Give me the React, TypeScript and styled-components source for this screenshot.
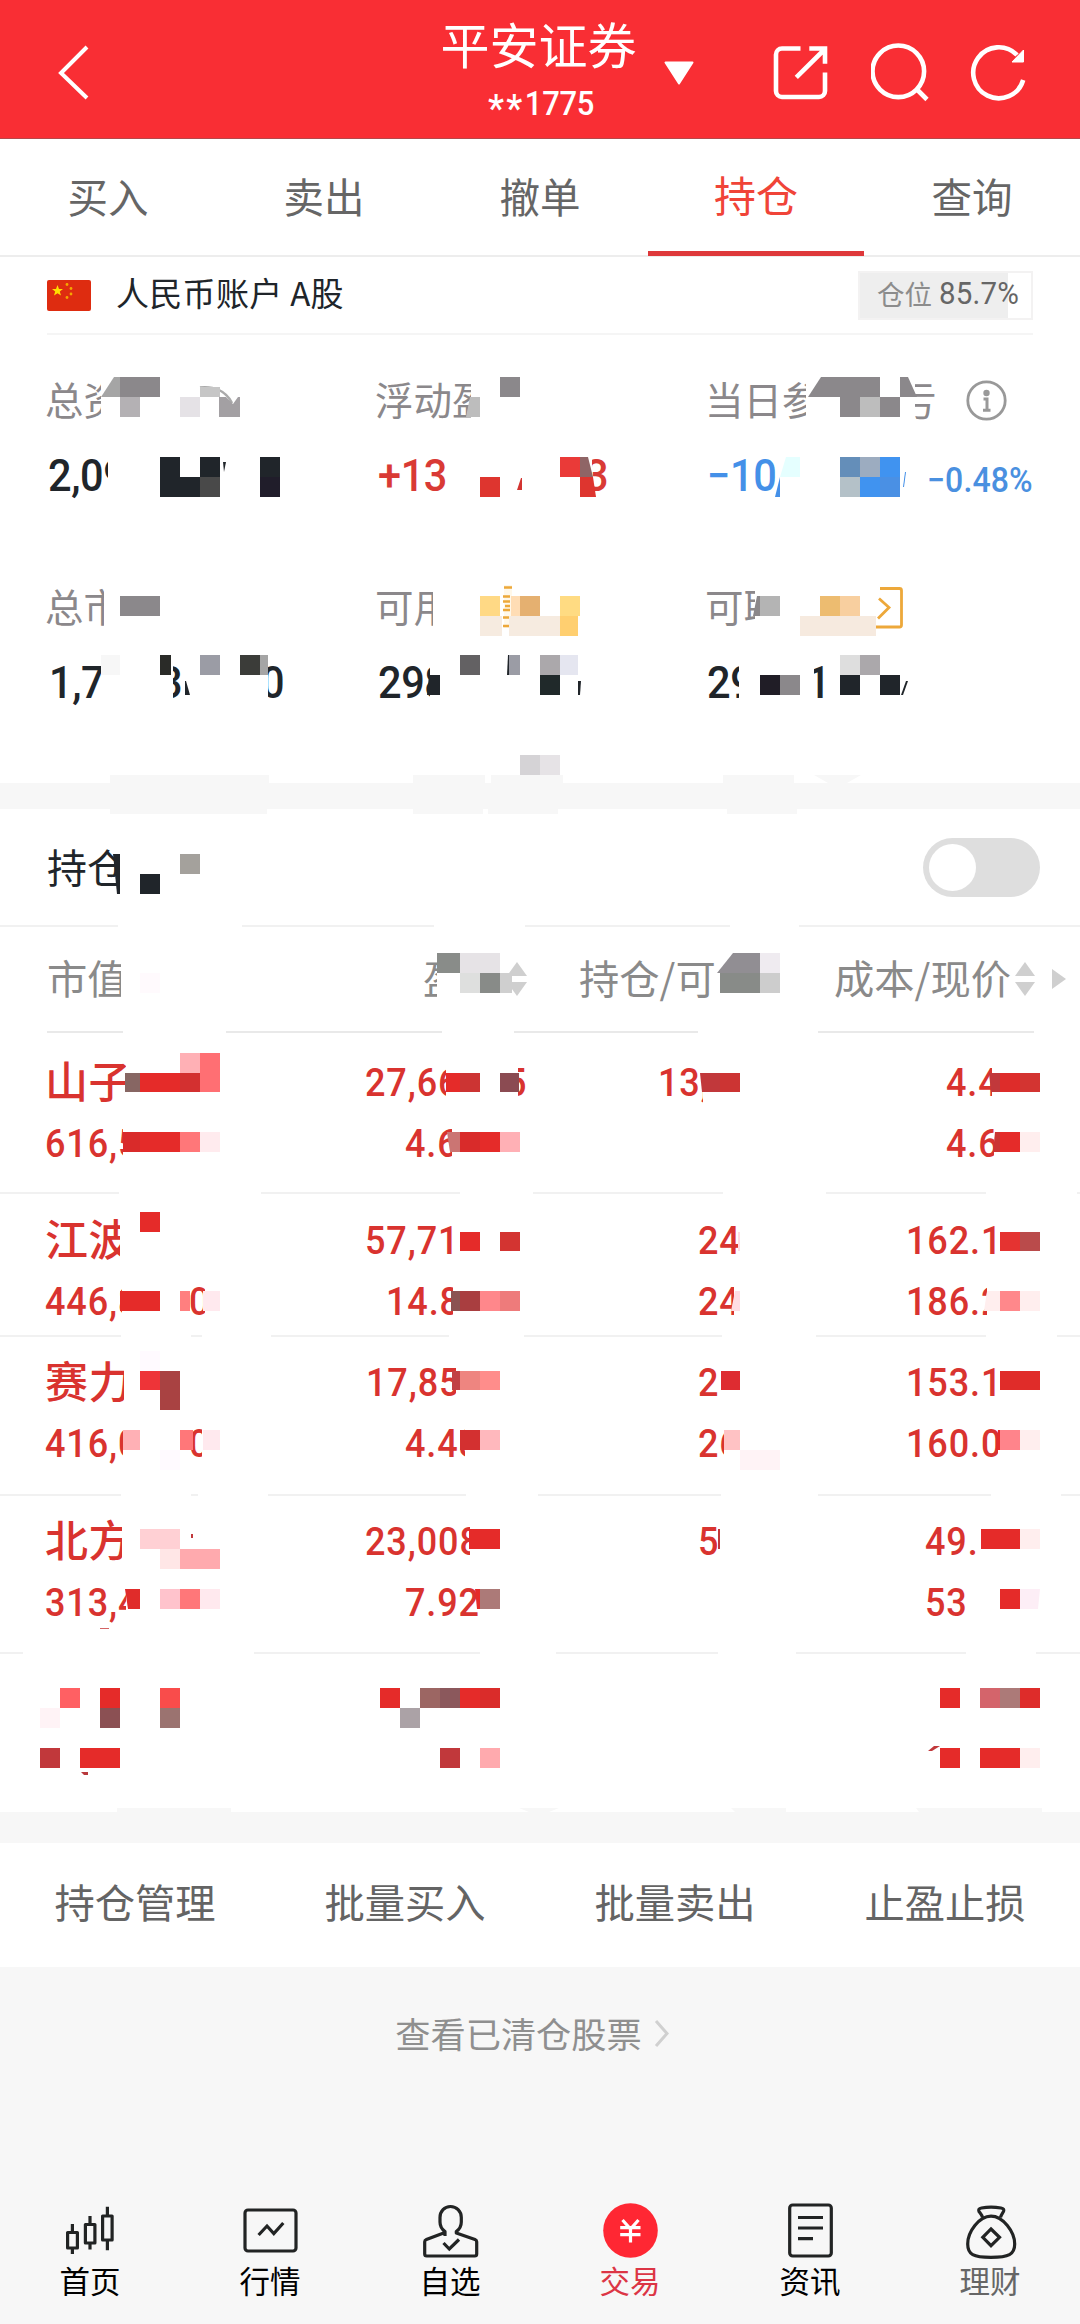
import React from 'react';
import styled, { createGlobalStyle, css } from 'styled-components';

const CJK = "'Noto Sans CJK SC', 'Noto Sans', sans-serif";
const NUM = "Roboto, 'Noto Sans CJK SC', sans-serif";
const RED = '#e52b29';
const INK = '#20252a';
const GREY = '#8b888b';

const GlobalStyle = createGlobalStyle`
  * { box-sizing: border-box; }
  body { margin: 0; background: #f7f7f7; font-family: ${CJK}; }
`;

const Page = styled.div`
  position: relative;
  width: 1080px;
  height: 2324px;
  display: flex;
  flex-direction: column;
  background: #f7f7f7;
  overflow: hidden;
`;

/* ---------- header ---------- */
const Header = styled.header`
  height: 139px;
  flex: none;
  display: grid;
  grid-template-columns: 440px 200px 440px;
  background: #f92e34;
  border-bottom: 1px solid #b5484b;
  color: #fff;
`;
const HeaderLeft = styled.div`
  display: flex;
  align-items: center;
  padding: 8px 0 0 43px;
`;
const HeaderTitle = styled.div`
  display: flex;
  flex-direction: column;
  align-items: center;
  padding-top: 13px;
`;
const BrokerName = styled.div`
  font: 400 49px/60px ${CJK};
  margin-left: -3px;
  white-space: nowrap;
`;
const AccountTail = styled.div`
  display: flex;
  align-items: center;
  font: 500 31px/56px ${NUM};
  letter-spacing: -0.3px;
  margin: -2px 0 0 2px;
  transform: scaleY(1.08);
`;
const Stars = styled.span`
  font-size: 36px;
  letter-spacing: 2.5px;
  padding-top: 10px;
`;
const HeaderRight = styled.div`
  display: flex;
  align-items: center;
  padding: 8px 0 0 24px;
`;
const IconSlot = styled.div<{ $gap?: number }>`
  display: flex;
  margin-left: ${p => p.$gap ?? 0}px;
`;

/* ---------- tabs ---------- */
const Tabs = styled.nav`
  height: 118px;
  flex: none;
  display: grid;
  grid-template-columns: repeat(5, 1fr);
  background: #fff;
  border-bottom: 2px solid #ededed;
`;
const Tab = styled.div<{ $active?: boolean }>`
  display: flex;
  justify-content: center;
  height: 117px;
  font: 400 ${p => (p.$active ? 42 : 40.5)}px/${p => (p.$active ? 110 : 113)}px ${CJK};
  color: ${p => (p.$active ? '#f04438' : '#666')};
  ${p => p.$active && css`border-bottom: 5px solid #de383a;`}
`;

/* ---------- account ---------- */
const Account = styled.section`
  height: 526px;
  flex: none;
  background: #fff;
  padding: 0 47px;
`;
const AccountBar = styled.div`
  height: 78px;
  display: flex;
  align-items: center;
  border-bottom: 2px solid #f5f5f5;
`;
const AccountName = styled.div`
  flex: 1;
  margin: -6px 0 0 25px;
  font: 400 33px/44px ${CJK};
  letter-spacing: 0.3px;
  color: ${INK};
`;
const Flag = styled.div`
  display: flex;
  margin-top: 1px;
`;
const Position = styled.div`
  width: 175px;
  height: 49px;
  display: flex;
  align-items: center;
  padding: 0 0 4px 17px;
  border: 2px solid #f3f2f2;
  background: linear-gradient(to right, #eee 148px, #fff 148px);
  font: 400 27.5px/40px ${CJK};
  color: #8c8c8c;
`;
const Percent = styled.span`
  font: 400 29.5px/44px ${NUM};
  margin: 2px 0 0 7px;
  letter-spacing: 0.2px;
  transform: scaleY(1.05);
  color: #666;
`;
const StatGrid = styled.div`
  display: grid;
  grid-template-columns: 330px 330px 330px;
  grid-auto-rows: 207px;
  padding-top: 37px;
`;
const Stat = styled.div`
  display: flex;
  flex-direction: column;
`;
const StatLabel = styled.div`
  display: flex;
  height: 52px;
  margin-left: -2px;
  font: 400 38.5px/52px ${CJK};
  color: ${GREY};
`;
const StatValue = styled.div<{ $color?: string }>`
  display: flex;
  height: 60px;
  margin-top: 22px;
  font: 500 41.5px/60px ${NUM};
  letter-spacing: -0.4px;
  padding-left: 1px;
  transform: scaleY(1.09);
  color: ${p => p.$color ?? INK};
`;
const Change = styled.span`
  margin: 4px 0 0 147px;
  font: 500 32px/60px ${NUM};
  letter-spacing: 0.1px;
  white-space: nowrap;
  color: #4a90e0;
`;

/* A run of text of which only a window stays readable. */
const Window = styled.span<{ $w: number; $gap?: number }>`
  flex: none;
  width: ${p => p.$w}px;
  margin-left: ${p => p.$gap ?? 0}px;
  overflow: hidden;
  white-space: nowrap;
`;
const Shifted = styled.span<{ $by: number }>`
  display: inline-block;
  margin-left: ${p => -p.$by}px;
`;
type PieceData = { t: string; w: number; gap?: number; shift?: number };
const Piece = ({ t, w, gap, shift = 0 }: PieceData) => (
  <Window $w={w} $gap={gap}><Shifted $by={shift}>{t}</Shifted></Window>
);

/* ---------- holdings ---------- */
const Gap = styled.div<{ $h: number }>`
  height: ${p => p.$h}px;
  flex: none;
  background: #f7f7f7;
`;
const HoldingHead = styled.div`
  height: 116px;
  flex: none;
  display: flex;
  justify-content: space-between;
  align-items: center;
  padding: 0 40px 0 47px;
  background: #fff;
  font: 400 40px/60px ${CJK};
  color: ${INK};
`;
const Switch = styled.div`
  width: 117px;
  height: 59px;
  border-radius: 30px;
  padding: 6px;
  background: #dedede;
`;
const Knob = styled.div`
  width: 47px;
  height: 47px;
  border-radius: 50%;
  background: #fff;
`;
type Seg = [number, number];
const segGradient = (segs: Seg[], color: string) =>
  'linear-gradient(to right, ' +
  segs.map(([a, b]) => `transparent ${a}px, ${color} ${a}px, ${color} ${b}px, transparent ${b}px`).join(', ') + ')';
const Rule = styled.div<{ $segs: Seg[]; $color?: string }>`
  height: 2px;
  flex: none;
  background: ${p => segGradient(p.$segs, p.$color ?? '#f1f1f1')} #fff;
`;
const ColumnHead = styled.div`
  height: 104px;
  flex: none;
  display: grid;
  grid-template-columns: 423px 156px 255px 246px;
  align-items: center;
  background: #fff;
  padding-bottom: 1px;
  font: 400 40.3px/60px ${CJK};
  color: #8a8a8a;
`;
const HeadCell = styled.div<{ $left?: number }>`
  display: flex;
  align-items: center;
  padding-left: ${p => p.$left ?? 0}px;
  white-space: nowrap;
`;
const HeadText = styled.span`
  display: flex;
  margin-top: -3px;
`;
const Row = styled.div<{ $h: number; $top: number }>`
  height: ${p => p.$h}px;
  flex: none;
  display: grid;
  grid-template-columns: 320px 206px 254px 260px;
  padding: ${p => p.$top}px 0 0;
  background: #fff;
  color: #d9332f;
`;
const Cell = styled.div<{ $lead?: boolean }>`
  display: flex;
  flex-direction: column;
  ${p => (p.$lead ? css`padding-left: 45px;` : css`align-items: flex-end;`)}
`;
const Line = styled.div<{ $name?: boolean; $reserve?: number }>`
  display: flex;
  height: 61px;
  font: 500 36px/61px ${NUM};
  letter-spacing: 0.9px;
  transform: scaleY(1.083);
  ${p => p.$reserve && css`width: ${p.$reserve}px;`}
  ${p => p.$name && css`font: 500 43px/52px ${CJK}; letter-spacing: 0.6px; transform: none;`}
`;

/* ---------- footer parts ---------- */
const Actions = styled.div`
  height: 124px;
  flex: none;
  display: grid;
  grid-template-columns: repeat(4, 1fr);
  background: #fff;
  text-align: center;
  font: 400 40.3px/115px ${CJK};
  color: #646464;
`;
const Cleared = styled.div`
  flex: 1;
  display: flex;
  justify-content: center;
  gap: 11px;
  padding: 38px 14px 0 0;
  font: 400 35.2px/56px ${CJK};
  color: #8f8f8f;
`;
const Chevron = styled.div`
  padding-top: 13px;
  line-height: 0;
`;
const BottomNav = styled.nav`
  height: 124px;
  flex: none;
  display: grid;
  grid-template-columns: repeat(6, 1fr);
`;
const NavItem = styled.div<{ $color?: string }>`
  display: flex;
  flex-direction: column;
  align-items: center;
  font: 400 30.5px/41px ${CJK};
  color: ${p => p.$color ?? '#000'};
`;

/* ---------- redaction layer ---------- */
const Redaction = styled.div`
  position: absolute;
  inset: 0;
  pointer-events: none;
`;
type CellProps = { $x: number; $y: number; $w: number; $h: number; $c: string; $cut?: string };
const Pixel = styled.i.attrs<CellProps>(p => ({
  style: { left: p.$x, top: p.$y, width: p.$w, height: p.$h, background: p.$c, clipPath: p.$cut },
}))<CellProps>`
  position: absolute;
`;

// [top, height, [left, right, colour, leftSlantTop?, leftSlantBottom?, rightSlantTop?, rightSlantBottom?][]]
type Block = [number, number, string, number?, number?, number?, number?];
const BANDS: [number, number, Block[]][] = [
  [377, 20, [[101, 120, '#a5a5a5', 13, 0], [120, 160, GREY], [500, 520, GREY], [808, 880, GREY, 13, 0], [900, 917, GREY, 0, 0, 9, 0]]],
  [387, 10, [[200, 220, '#c6c6c6', 0, 0, 0, 0]]],
  [397, 20, [[120, 140, '#b4b1b4'], [180, 200, '#e5e2e6'], [466, 480, '#bdbdbd', 4, 0], [840, 860, GREY], [860, 880, '#bdbdbd'], [880, 900, GREY]]],
  [457, 20, [[160, 180, INK], [200, 220, INK], [260, 280, INK], [560, 580, '#ea3a38'], [580, 593, '#8f6566', 0, 0, 5, 0], [780, 800, '#e5ffff', 6, 0], [840, 860, '#648eb9'], [860, 880, '#9cacc0'], [880, 900, '#4093f0']]],
  [462, 10, [[223, 226, INK, 0, 1, 0, 2]]],
  [477, 20, [[160, 200, INK], [200, 220, '#494949'], [260, 280, '#201d2a'], [480, 500, '#de352f'], [580, 596, '#de352f', 0, 0, 3, 0], [775, 780, '#4490e8', 5, 0], [840, 860, '#b4c1c8'], [860, 880, '#4093f0'], [880, 900, '#4a90e4']]],
  [478, 12, [[517, 522, '#d33431', 4, 0]]],
  [472, 15, [[903, 906, '#4490e8', 2, 0, 0, 2]]],
  [596, 20, [[120, 160, GREY], [480, 500, '#ffd985'], [511, 520, '#ffddb5'], [520, 540, '#e5b070'], [560, 580, '#ffdb82'], [753, 760, GREY, 4, 0], [760, 780, '#b4b4b4'], [820, 840, '#edbc70'], [840, 860, '#f8cf9f']]],
  [616, 20, [[480, 502, '#f6ebe0'], [509, 560, '#f6ebe0'], [560, 578, '#ffcf70'], [800, 876, '#f6eadf']]],
  [655, 20, [[101, 120, '#f7f7f7'], [160, 171, '#2a2b28'], [200, 220, '#9b9ca5'], [240, 260, '#3b3c39'], [260, 268, '#a5a5a5'], [460, 480, '#636163'], [507, 509, INK, 1, 0], [509, 520, '#9b9ca5'], [540, 560, '#aba8ab'], [560, 578, '#e5e6f0'], [840, 860, '#dedede'], [860, 880, '#aba8ab']]],
  [675, 20, [[427, 440, INK, 2, 0], [540, 560, '#20292a'], [760, 780, '#201d26'], [780, 800, GREY], [840, 860, INK], [880, 900, INK]]],
  [681, 14, [[184, 190, INK, 1, 1, 4, 0], [578, 582, INK, 0, 0, 1, 2], [901, 908, INK, 5, 0, 0, 5]]],
  [755, 20, [[520, 540, '#d5d3d6'], [540, 560, '#e6e3e6']]],
  [775, 8, [[110, 269, '#f7f7f7'], [413, 485, '#f7f7f7'], [491, 563, '#f7f7f7'], [723, 794, '#f7f7f7'], [814, 861, '#f7f7f7', 0, 14, 0, 14]]],
  [809, 5, [[110, 267, '#f7f7f7'], [413, 483, '#f7f7f7'], [488, 558, '#f7f7f7'], [727, 797, '#f7f7f7']]],
  [854, 40, [[113, 120, INK, 0, 4]]],
  [854, 20, [[180, 200, '#a4a19c']]],
  [874, 20, [[140, 160, INK]]],
  [953, 20, [[437, 460, '#898c89'], [460, 500, '#e6e3e6'], [717, 760, '#918e93', 16, 0], [760, 780, '#efebf0']]],
  [973, 20, [[140, 160, '#fffafd'], [460, 480, '#dedfde'], [480, 500, '#888b88'], [500, 512, '#cfcfcf'], [720, 760, '#888b88'], [760, 780, '#cdcdcd']]],

  [1053, 20, [[180, 200, '#ffb0b5'], [200, 220, '#ff6f73']]],
  [1073, 19, [[125, 140, '#876663'], [140, 180, RED], [180, 200, '#d33030'], [200, 220, '#ff6f73'], [446, 460, RED], [460, 480, '#cc3433'], [500, 519, '#8b4b52'], [700, 720, '#c1383b', 0, 2], [720, 740, '#cc3433'], [989, 1000, '#c1383b', 0, 2], [1000, 1020, '#de2c2a'], [1020, 1040, '#d33431']]],
  [1132, 20, [[123, 140, '#d92b2a'], [140, 180, RED], [180, 200, '#ff7779'], [200, 220, '#ffebee'], [447, 460, '#cb7573', 0, 3], [460, 480, '#d92b2a'], [480, 500, RED], [500, 520, '#ffb0b5'], [993, 1000, '#cb3433', 2, 0], [1000, 1020, RED], [1020, 1040, '#ffeeee']]],
  [1212, 20, [[140, 160, RED]]],
  [1232, 19, [[460, 480, RED], [500, 520, '#d33431'], [738, 740, '#ffdde4'], [1000, 1020, '#e53331'], [1020, 1040, '#ba4b4b']]],
  [1291, 20, [[120, 160, RED], [180, 190, '#ff7f7f'], [203, 220, '#ffe9ee'], [451, 460, '#8b5352'], [460, 480, '#a93e40'], [480, 500, '#ff878b'], [500, 520, '#ee7b7b'], [731, 740, '#ffdde4', 4, 0], [984, 1000, '#ffeeee', 3, 0], [1000, 1020, '#ff888b'], [1020, 1040, '#ffeeee']]],
  [1351, 20, [[140, 160, '#fffaff']]],
  [1371, 19, [[140, 160, '#ee3438'], [160, 180, '#a94242'], [452, 460, '#c14045'], [460, 480, '#ee8580'], [480, 500, '#ff8d8b'], [721, 740, '#de2c31'], [1000, 1040, '#e02c29']]],
  [1390, 20, [[160, 180, '#a94242']]],
  [1430, 20, [[123, 140, '#ffb0b5'], [180, 193, '#ff7779'], [203, 220, '#ffe9ee'], [460, 480, '#d33030'], [480, 500, '#ffb8bd'], [724, 740, '#ffc2c4'], [996, 1000, RED, 2, 0], [1000, 1020, '#ff848b'], [1020, 1040, '#ffeeee']]],
  [1450, 20, [[160, 180, '#fffaff'], [740, 780, '#fff3f6']]],
  [1529, 20, [[140, 180, '#ffd0d4'], [469, 500, RED], [718, 720, '#c1383b'], [981, 1020, RED], [1020, 1040, '#ffeeee']]],
  [1534, 4, [[191, 193, '#c1383b']]],
  [1549, 20, [[160, 180, '#ffe6e6'], [180, 220, '#ffaaae']]],
  [1589, 20, [[125, 140, '#e02c2a', 0, 3], [160, 180, '#ffc3cc'], [180, 200, '#ff7779'], [200, 220, '#ffe9ee'], [475, 480, RED, 0, 2], [480, 500, '#ac7a78'], [1000, 1020, RED], [1020, 1040, '#fdeef6', 0, 0, 0, 2]]],
  [1628, 1, [[100, 109, '#d46464']]],
  [1688, 20, [[60, 80, '#ff6063'], [100, 120, RED], [160, 180, '#f94c4b'], [380, 400, RED], [420, 440, '#9c6663'], [440, 460, '#8b585c'], [460, 480, RED], [480, 500, '#da2c2a'], [940, 960, RED], [980, 1000, '#d4646b'], [1000, 1020, '#ac7a78'], [1020, 1040, '#de2c2a']]],
  [1708, 20, [[40, 60, '#fff3f6'], [100, 120, '#8b5053'], [160, 180, '#9b7370'], [400, 420, '#aba2a6']]],
  [1746, 5, [[928, 940, '#c1383b', 6, 0, 0, 8]]],
  [1748, 20, [[40, 60, '#c1383b'], [80, 120, RED], [440, 460, '#c1383b'], [480, 500, '#ffaaae'], [940, 960, RED], [980, 1020, RED], [1020, 1040, '#ffeeee']]],
  [1772, 3, [[80, 88, '#b8383b', 1, 4]]],
  [1808, 4, [[117, 231, '#f7f7f7'], [519, 559, '#f7f7f7', 0, 10, 0, 10], [731, 786, '#f7f7f7', 0, 4], [916, 1042, '#f7f7f7', 0, 3]]],
];

const Mosaic = () => (
  <Redaction>
    {BANDS.map(([y, h, blocks]) =>
      blocks.map(([a, b, c, lt = 0, lb = 0, rt = 0, rb = 0]) => (
        <Pixel
          key={`${y}-${a}`}
          $x={a} $y={y} $w={b - a} $h={h} $c={c}
          $cut={lt || lb || rt || rb
            ? `polygon(${lt}px 0, calc(100% - ${rt}px) 0, calc(100% - ${rb}px) 100%, ${lb}px 100%)`
            : undefined}
        />
      )))}
  </Redaction>
);

/* ---------- data ---------- */
type Figures = PieceData[];
type Holding = {
  h: number; top: number; rule: Seg[];
  name: PieceData; value: Figures;
  profit: [number, Figures][]; shares: [number, Figures][]; price: [number, Figures][];
};
const HOLDINGS: Holding[] = [
  {
    h: 159, top: 20, rule: [[0, 119], [261, 460], [533, 723], [826, 986], [1077, 1080]],
    name: { t: '山子', w: 81 }, value: [{ t: '616,5', w: 78 }],
    profit: [[161, [{ t: '27,66', w: 81 }, { t: '5', w: 8, gap: 72, shift: 12 }]], [121, [{ t: '4.66', w: 47 }]]],
    shares: [[122, [{ t: '13,', w: 45 }]]],
    price: [[94, [{ t: '4.4', w: 46 }]], [94, [{ t: '4.6', w: 48 }]]],
  },
  {
    h: 141, top: 17, rule: [[0, 121], [191, 202], [271, 449], [524, 722], [816, 986], [1057, 1080]],
    name: { t: '江波', w: 75 }, value: [{ t: '446,8', w: 77 }, { t: '0', w: 15, gap: 68, shift: 1 }],
    profit: [[161, [{ t: '57,714', w: 98 }]], [140, [{ t: '14.8', w: 67 }]]],
    shares: [[82, [{ t: '24', w: 42 }]], [82, [{ t: '24', w: 36 }]]],
    price: [[134, [{ t: '162.1', w: 90 }]], [134, [{ t: '186.2', w: 81 }]]],
  },
  {
    h: 157, top: 16, rule: [[0, 121], [191, 198], [268, 466], [538, 721], [818, 991], [1061, 1080]],
    name: { t: '赛力', w: 79 }, value: [{ t: '416,0', w: 78 }, { t: '0', w: 12, gap: 67, shift: 1 }],
    profit: [[160, [{ t: '17,85', w: 90 }]], [121, [{ t: '4.48', w: 60 }]]],
    shares: [[82, [{ t: '2', w: 24 }]], [82, [{ t: '26', w: 26 }]]],
    price: [[134, [{ t: '153.1', w: 90 }]], [134, [{ t: '160.0', w: 92 }]]],
  },
  {
    h: 156, top: 16, rule: [[0, 23], [254, 480], [556, 718], [796, 966], [1036, 1080]],
    name: { t: '北方', w: 77 }, value: [{ t: '313,4', w: 81 }],
    profit: [[161, [{ t: '23,008', w: 105 }]], [121, [{ t: '7.92', w: 80 }]]],
    shares: [[82, [{ t: '5', w: 21 }]]],
    price: [[115, [{ t: '49.', w: 52 }]], [115, [{ t: '53', w: 43 }]]],
  },
];
const FigureColumn = ({ lines }: { lines: [number, Figures][] }) => (
  <Cell>
    {lines.map(([reserve, parts], i) => (
      <Line key={i} $reserve={reserve}>{parts.map((p, j) => <Piece key={j} {...p} />)}</Line>
    ))}
  </Cell>
);

/* ---------- icons ---------- */
const Svg = ({ w = 60, h = 60, children, sw = 4, color = '#fff' }: any) => (
  <svg width={w} height={h} viewBox={`0 0 ${w} ${h}`} fill="none" stroke={color} strokeWidth={sw}>{children}</svg>
);
const SortIcon = () => (
  <svg width="20" height="36" viewBox="0 0 20 36" fill="#cfcfcf">
    <path d="M10 1 20 15H0Z" /><path d="M10 35 20 21H0Z" />
  </svg>
);
const NAV = [
  { t: '首页', icon: <><path d="M7.6 32.5h9.8v15.5h-9.8zM12.4 24v8.500M12.400 48v6M25.400 24.500h9.500v18.500h-9.500zM30 16v8.500M30 43v6.500M42.600 16h9.500v24h-9.500zM47.400 6.700v9.300M47.400 40v10.300" strokeLinejoin="round" /></> },
  { t: '行情', icon: <><rect x="5" y="10" width="51" height="41" rx="3" /><path d="M18.600 35 27 26l6.800 7.500L43.300 23" /></> },
  { t: '自选', icon: <><path d="M25 36v-4.500C21.500 29 20 25.500 20 22v-4.500C20 11 24.500 6.500 30.500 6.500S41.300 11 41.300 17.500V22c0 3.500-1.500 7-5 9.500V33L55 39.500c1 .4 1.700 1.200 1.700 2.300V54c0 1-.7 2-2 2H6.700c-1.300 0-2-1-2-2V41.800c0-1.100.7-1.900 1.700-2.300L25 32.500" strokeLinejoin="round" /><path d="M23.500 43 29.300 49 39 39.500" /></> },
  { t: '交易', color: '#dc3545', icon: <><circle cx="30.500" cy="30.500" r="27.300" fill="#ff2733" stroke="none" /><path d="m22.500 20 8 9 8-9M20.200 27.600h20.300M20.200 34.600h20.300M30.500 28v14.500" stroke="#fff" strokeWidth="3.200" /></> },
  { t: '资讯', icon: <><rect x="9.700" y="5" width="41.600" height="51" rx="3" /><path d="M18 17.500h25M18 28h25M18 38.700h15" /></> },
  { t: '理财', color: '#666', icon: <><path d="M22.500 17.500c-.5-2.500-2-4-3.500-6-.8-1.800 0-3 2.500-3.500 6-1.200 13-1.200 19.500 0 2.500.5 3.300 1.700 2.500 3.500-1.200 2-2.500 3.500-3 6" /><path d="M31 16.200C43 16.200 54.700 32 54.700 44c0 10.500-6 13.300-23.700 13.300S7.700 54.500 7.700 44C7.700 32 19 16.200 31 16.200Z" /><path d="m31 29 8.500 8.300L31 45.700l-8.200-8.400Z" /></> },
];

export default function App() {
  return (
    <Page>
      <GlobalStyle />
      <Header>
        <HeaderLeft>
          <Svg><path d="M44 4 18 30 44 55" /></Svg>
        </HeaderLeft>
        <HeaderTitle>
          <BrokerName>平安证券</BrokerName>
          <AccountTail><Stars>**</Stars>1775</AccountTail>
        </HeaderTitle>
        <HeaderRight>
          <svg width="30" height="24" viewBox="0 0 30 24" fill="#fff" stroke="#fff" strokeWidth="2" strokeLinejoin="round"><path d="M1.500 1.500h27L15 22.500Z" /></svg>
          <IconSlot $gap={77}>
            <Svg sw={4.6}><path d="M29.500 5.500H11a6 6 0 0 0-6 6V48a6 6 0 0 0 6 6h37a6 6 0 0 0 6-6V29.500M38.300 5.500H54V20.700M54 6 25.300 34.300" /></Svg>
          </IconSlot>
          <IconSlot $gap={40}>
            <Svg sw={4.6}><circle cx="27.300" cy="28.300" r="25.800" /><path d="M45.500 46 56 56.500" /></Svg>
          </IconSlot>
          <IconSlot $gap={38}>
            <Svg sw={4.6}><path d="M54.200 37A25.500 25.500 0 1 1 48 12" /><path d="M54.500 7V19H43Z" fill="#fff" strokeWidth="1" /></Svg>
          </IconSlot>
        </HeaderRight>
      </Header>

      <Tabs>
        <Tab>买入</Tab><Tab>卖出</Tab><Tab>撤单</Tab><Tab $active>持仓</Tab><Tab>查询</Tab>
      </Tabs>

      <Account>
        <AccountBar>
          <Flag>
            <svg width="44" height="31" viewBox="0 0 44 31">
              <rect width="44" height="31" rx="2" fill="#de2c10" />
              <path d="m10.500 5 1.500 4h4l-3.200 2.600 1.200 4-3.500-2.400L7 15.600l1.200-4L5 9h4Z" fill="#ffe000" />
              <g fill="#f5a800"><circle cx="20" cy="4.500" r="1.400" /><circle cx="24" cy="8.500" r="1.400" /><circle cx="24" cy="14" r="1.400" /><circle cx="20" cy="17.500" r="1.400" /></g>
            </svg>
          </Flag>
          <AccountName>人民币账户 A股</AccountName>
          <Position>仓位<Percent>85.7%</Percent></Position>
        </AccountBar>
        <StatGrid>
          <Stat>
            <StatLabel>
              <Piece t="总资" w={56} />
              <IconSlot $gap={98}>
                <svg width="44" height="52" viewBox="0 0 44 52"><path d="M1 15.500C15 14 27 19 33 31" fill="none" stroke="#aaa" strokeWidth="2.500" /><path d="M20 25h7l7 7 5-7h2v20h-21Z" fill="#a3a0a3" /></svg>
              </IconSlot>
            </StatLabel>
            <StatValue><Piece t="2,09" w={60} /></StatValue>
          </Stat>
          <Stat>
            <StatLabel><Piece t="浮动盈" w={96} /></StatLabel>
            <StatValue $color="#d93a35"><Piece t="+13" w={73} /><Piece t="3" w={16} gap={141} shift={7} /></StatValue>
          </Stat>
          <Stat>
            <StatLabel>
              <Piece t="当日参" w={101} />
              <Piece t="亏" w={21} gap={109} shift={17} />
              <IconSlot $gap={30}>
                <Svg w={42} h={52} color="#999" sw={2.8}><circle cx="20.500" cy="28.500" r="18.700" /><circle cx="20.500" cy="21" r="3.200" fill="#999" stroke="none" /><path d="M17.500 27H21v11M17 38.300h7.500" strokeWidth="3" /></Svg>
              </IconSlot>
            </StatLabel>
            <StatValue $color="#4490e8"><Piece t="−10" w={73} gap={-1} /><Change>−0.48%</Change></StatValue>
          </Stat>
          <Stat>
            <StatLabel><Piece t="总市" w={59} /></StatLabel>
            <StatValue><Piece t="1,7" w={54} gap={1} /><Piece t="3" w={8} gap={70} shift={14} /><Piece t="0" w={17} gap={87} shift={7} /></StatValue>
          </Stat>
          <Stat>
            <StatLabel>
              <Piece t="可用" w={58} />
              <IconSlot $gap={69}>
                <svg width="12" height="52" viewBox="0 0 12 52"><path d="M6 6v43" stroke="#fff8ea" strokeWidth="8" /><path d="M2 8.500h8M1 17.500h7M1 22.500h7M3 27h5M1 31h7M1 38.500h8M1 47h8" stroke="#eda83a" strokeWidth="2.500" /></svg>
              </IconSlot>
            </StatLabel>
            <StatValue><Piece t="298" w={52} /></StatValue>
          </Stat>
          <Stat>
            <StatLabel>
              <Piece t="可取" w={50} />
              <IconSlot $gap={120}>
                <Svg w={30} h={52} color="#eda83a" sw={2.8}><path d="M5 9.500h19.500a2 2 0 0 1 2 2V46a2 2 0 0 1-2 2H1M4 19.500 14 28.500 3 39.500" /></Svg>
              </IconSlot>
            </StatLabel>
            <StatValue><Piece t="29" w={32} gap={-1} /><Piece t="1" w={10} gap={75} shift={7} /></StatValue>
          </Stat>
        </StatGrid>
      </Account>

      <Gap $h={26} />
      <HoldingHead>
        <HeadText><Piece t="持仓" w={71} /></HeadText>
        <Switch><Knob /></Switch>
      </HoldingHead>
      <Rule $segs={[[0, 118], [242, 434], [525, 730], [799, 1080]]} />
      <ColumnHead>
        <HeadCell $left={47}><HeadText><Piece t="市值" w={74} /></HeadText></HeadCell>
        <HeadCell><HeadText><Piece t="盈" w={14} /></HeadText><IconSlot $gap={70}><SortIcon /></IconSlot></HeadCell>
        <HeadCell><HeadText><Piece t="持仓/可" w={137} /></HeadText></HeadCell>
        <HeadCell>
          <HeadText>成本/现价</HeadText>
          <IconSlot $gap={4}><SortIcon /></IconSlot>
          <IconSlot $gap={17}><svg width="14" height="20" viewBox="0 0 14 20"><path d="M0 0 14 10 0 20Z" fill="#cfcfcf" /></svg></IconSlot>
        </HeadCell>
      </ColumnHead>
      <Rule $segs={[[47, 123], [226, 442], [514, 698], [818, 1034]]} $color="#e9e9e9" />

      {HOLDINGS.map(r => (
        <React.Fragment key={r.name.t}>
          <Row $h={r.h} $top={r.top}>
            <Cell $lead>
              <Line $name><Piece {...r.name} /></Line>
              <Line>{r.value.map((p, i) => <Piece key={i} {...p} />)}</Line>
            </Cell>
            <FigureColumn lines={r.profit} />
            <FigureColumn lines={r.shares} />
            <FigureColumn lines={r.price} />
          </Row>
          <Rule $segs={r.rule} />
        </React.Fragment>
      ))}
      <Row $h={158} $top={0} />

      <Gap $h={31} />
      <Actions><span>持仓管理</span><span>批量买入</span><span>批量卖出</span><span>止盈止损</span></Actions>
      <Cleared>
        查看已清仓股票
        <Chevron><Svg w={18} h={32} color="#d0d0d0" sw={3}><path d="M3 3 14 15.500 3 28" /></Svg></Chevron>
      </Cleared>
      <BottomNav>
        {NAV.map(n => (
          <NavItem key={n.t} $color={n.color}>
            <Svg color="#222424" sw={3.2}>{n.icon}</Svg>
            {n.t}
          </NavItem>
        ))}
      </BottomNav>
      <Mosaic />
    </Page>
  );
}
